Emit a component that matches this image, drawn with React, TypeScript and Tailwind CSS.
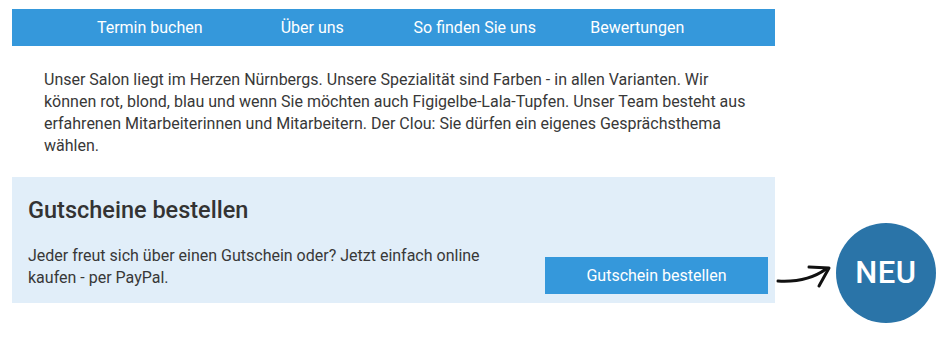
import { type ReactNode } from 'react';

const navItems: string[] = ['Termin buchen', 'Über uns', 'So finden Sie uns', 'Bewertungen'];

function NavItem({ children }: { children: ReactNode }) {
    return (
        <a href="#" className="w-[162.5px] text-center text-white text-[16px] leading-[37px]">
            {children}
        </a>
    );
}

export default function App() {
    return (
        <div className="relative w-[940px] h-[353px] bg-white pt-[9px] pl-[12px] font-['Roboto',sans-serif] text-[#383838]">
            <div className="w-[763px]">
                {/* Navigation */}
                <nav className="h-[37px] bg-[#3598db] flex justify-center">
                    {navItems.map((item) => (
                        <NavItem key={item}>{item}</NavItem>
                    ))}
                </nav>

                {/* Intro */}
                <p className="pl-8 pr-5 mt-[23px] text-[16px] leading-[22px]">
                    Unser Salon liegt im Herzen Nürnbergs. Unsere Spezialität sind Farben - in allen Varianten. Wir
                    können rot, blond, blau und wenn Sie möchten auch Figigelbe-Lala-Tupfen. Unser Team besteht aus
                    erfahrenen Mitarbeiterinnen und Mitarbeitern. Der Clou: Sie dürfen ein eigenes Gesprächsthema
                    wählen.
                </p>

                {/* Gutscheine */}
                <section className="mt-[20px] bg-[#e1eef9] pl-4 pr-[7px] pt-[18px] pb-[9px]">
                    <h2 className="text-[23.5px] leading-[30px] font-medium text-[#333]">Gutscheine bestellen</h2>
                    <div className="mt-[20px] flex items-end justify-between">
                        <p className="w-[480px] text-[16px] leading-[22px] pb-[5px]">
                            Jeder freut sich über einen Gutschein oder? Jetzt einfach online kaufen - per PayPal.
                        </p>
                        <a
                            href="#"
                            className="w-[223px] h-[37px] bg-[#3598db] text-white text-[16px] flex items-center justify-center"
                        >
                            Gutschein bestellen
                        </a>
                    </div>
                </section>
            </div>

            {/* NEU badge */}
            <svg className="absolute left-[774px] top-[262px]" width="62" height="32" viewBox="774 262 62 32" fill="none">
                <path d="M778 281 C795 282 811 280 826 269" stroke="#111" strokeWidth="3" strokeLinecap="round" />
                <path d="M809 267 L829 268 L819 286" stroke="#111" strokeWidth="3" strokeLinecap="round" strokeLinejoin="round" />
            </svg>
            <div className="absolute left-[836px] top-[223px] w-[100px] h-[100px] rounded-full bg-[#2a74a8] flex items-center justify-center">
                <span className="text-white text-[31px] font-medium tracking-[0.5px]">NEU</span>
            </div>
        </div>
    );
}
